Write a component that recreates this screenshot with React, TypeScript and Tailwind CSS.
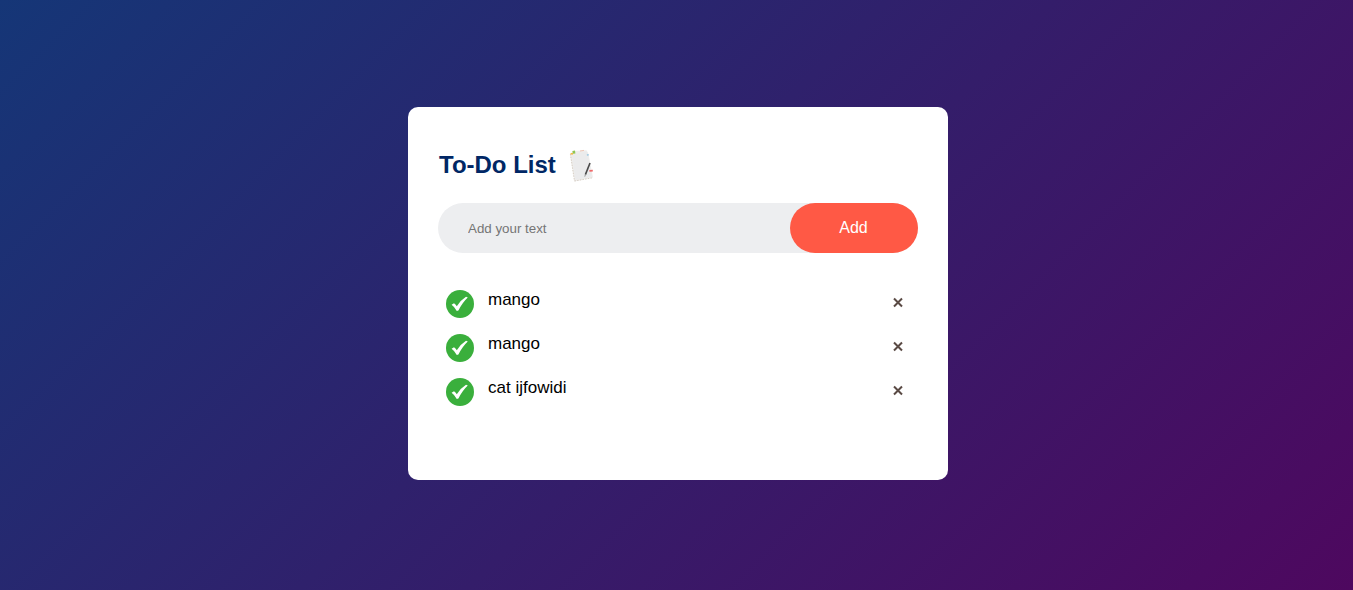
import { useState } from "react";

function NotepadIcon() {
  return (
    <svg width="30" height="34" viewBox="0 0 30 34" aria-hidden="true">
      <path d="M2 6 L5 3 L18.5 2.2 L20.5 6 L25 29.5 L6.5 33.4 Z" fill="#eeedec" />
      <path d="M2.4 6 L6.5 33 M6.5 33 L24.6 29.8" fill="none" stroke="#d8cfc5" strokeWidth="1" strokeDasharray="1.5 1.2" />
      <path d="M4 6 L19.3 3.8 L23.5 28.6 L7.6 31.6 Z" fill="#ebebec" />
      <path d="M4.4 3 L7 2.6 L7.4 5.4 L4.8 5.8 Z" fill="#8fc651" />
      <path d="M2.6 5.8 H5" stroke="#f3b83e" strokeWidth="1.5" />
      <path d="M12 3 L16 2.4" stroke="#efc6b6" strokeWidth="1" />
      <path d="M18.9 7 L20.7 6.8" stroke="#9ecae4" strokeWidth="1.5" />
      <path d="M17.4 26.6 L22 15" stroke="#4a4a4a" strokeWidth="1.6" />
      <path d="M16.8 28.6 L17.6 26" stroke="#888" strokeWidth="0.9" />
      <path d="M21.4 22.9 L24.8 22.7" stroke="#ef6868" strokeWidth="1.8" />
    </svg>
  );
}

function CheckIcon() {
  return (
    <svg width="28" height="28" viewBox="0 0 28 28" aria-hidden="true">
      <circle cx="14" cy="14" r="14" fill="#3aaf3c" />
      <path d="M5.6 14.8 L8 13.3 Q9.6 14.3 10.8 16.2 Q14.6 10.2 20 6.8 L21.8 7.4 Q16.6 12.2 12.4 20.4 L10.8 20.9 Q8.8 17.2 5.6 14.8 Z" fill="#fff" />
    </svg>
  );
}

export default function App() {
  const [tasks, setTasks] = useState(["mango", "mango", "cat ijfowidi"]);
  const [text, setText] = useState("");

  const addTask = () => {
    if (!text.trim()) return;
    setTasks([...tasks, text.trim()]);
    setText("");
  };

  return (
    <main className="min-h-screen bg-[linear-gradient(135deg,#153677,#4e085f)] pt-[107px] pb-5 pl-[3px] font-['Liberation_Sans',Arial,sans-serif]">
      <section className="mx-auto h-[373px] w-[540px] rounded-[10px] bg-white px-[30px] pt-10">
        <h2 className="flex h-9 items-center pl-px text-2xl font-bold text-[#002765]">
          To-Do List
          <span className="ml-3">
            <NotepadIcon />
          </span>
        </h2>
        <div className="mt-5 flex h-[50px] items-center justify-between rounded-[30px] bg-[#edeef0] pl-[30px]">
          <input
            className="min-w-0 flex-1 bg-transparent pt-0.5 text-[13.333px] outline-none placeholder:text-[#757575]"
            placeholder="Add your text"
            value={text}
            onChange={(e) => setText(e.target.value)}
          />
          <button className="h-[50px] w-32 rounded-[40px] bg-[#ff5945] pr-px pb-px text-base text-white" onClick={addTask}>
            Add
          </button>
        </div>
        <ul className="mt-[25px]">
          {tasks.map((task, i) => (
            <li key={i} className="flex h-11 items-start pt-3 pl-2 text-[17px] leading-5 text-black">
              <CheckIcon />
              <span className="ml-[14px] flex-1">{task}</span>
              <button
                className="-mt-[7px] flex h-10 w-10 items-center justify-center pb-px"
                aria-label="Remove task"
                onClick={() => setTasks(tasks.filter((_, n) => n !== i))}
              >
                <svg width="10" height="11" viewBox="0 0 10 11">
                  <path d="M1 1.5 L9 9.5 M9 1.5 L1 9.5" stroke="#5a4a44" strokeWidth="2" />
                </svg>
              </button>
            </li>
          ))}
        </ul>
      </section>
    </main>
  );
}
